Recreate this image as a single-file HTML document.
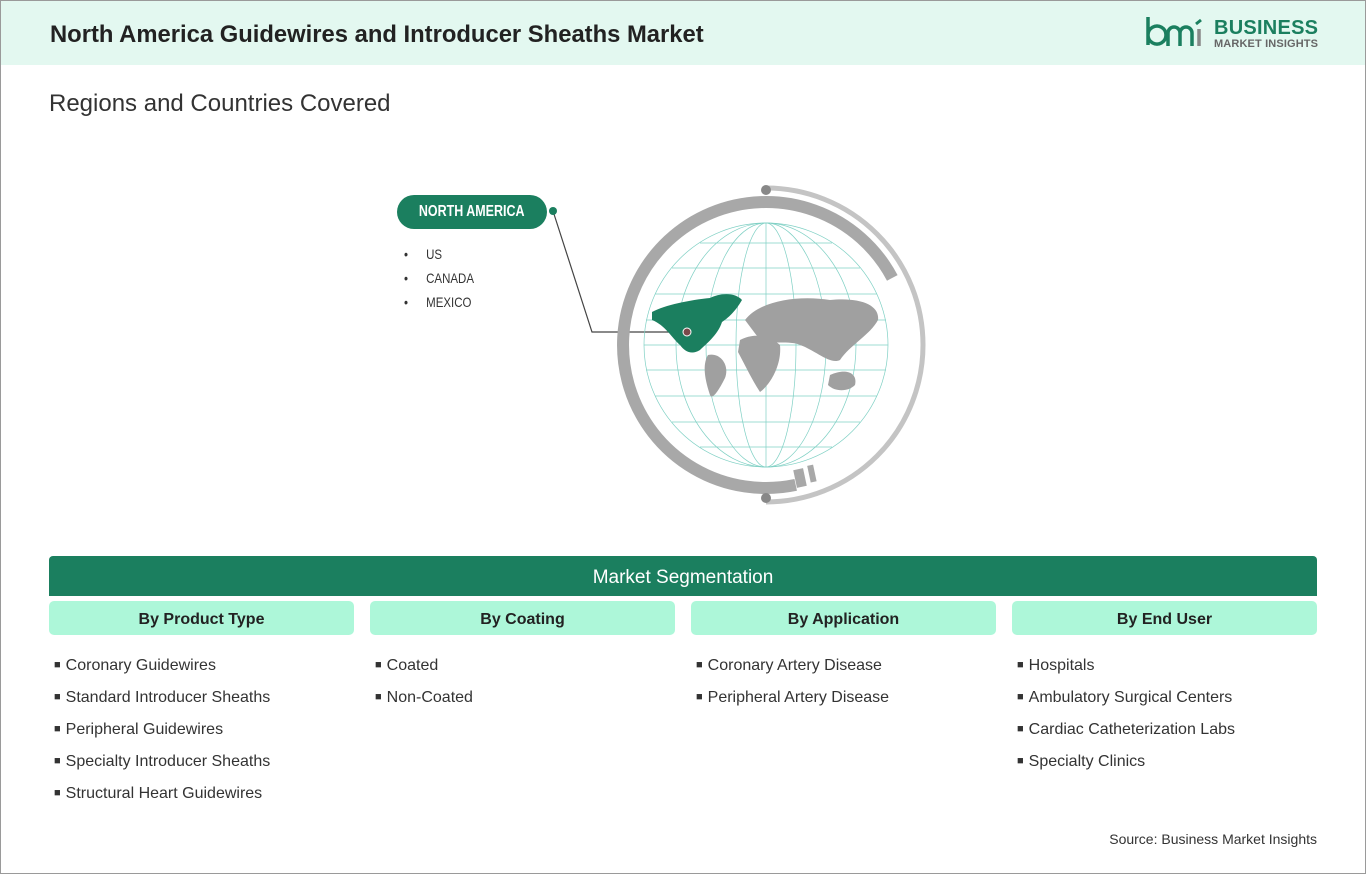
<!DOCTYPE html>
<html><head><meta charset="utf-8"><style>
*{margin:0;padding:0;box-sizing:border-box}
body{width:1366px;height:874px;background:#fff;font-family:"Liberation Sans",Arial,sans-serif;position:relative;overflow:hidden}
.frame{position:absolute;left:0;top:0;width:1366px;height:874px;border:1px solid #9a9a9a}
.hdr{position:absolute;left:1px;top:1px;width:1364px;height:64px;background:#e3f8f0}
.title{position:absolute;left:50px;top:21px;font-size:23.8px;font-weight:bold;color:#222}
.sub{position:absolute;left:49px;top:90px;font-size:24px;color:#333}
.segbar{position:absolute;left:49px;top:556px;width:1268px;height:40px;background:#1b7f5f;color:#fff;font-size:19px;text-align:center;line-height:44px;border-radius:4px 4px 0 0}
.col{position:absolute;top:601px;width:305px}
.col .h{height:34px;background:#adf7d9;border-radius:5px;text-align:center;font-weight:bold;font-size:16px;line-height:38px;color:#222}
.col ul{list-style:none;margin-top:22px;padding-left:5px}
.col li{font-size:16px;color:#333;height:32px}
.col li:before{content:"■";font-size:11px;margin-right:5px;position:relative;top:-2px}
.src{position:absolute;right:49px;top:831px;font-size:14px;color:#333}
.na{position:absolute;left:397px;top:195px;width:150px;height:34px;background:#1b7f5f;border-radius:17px;color:#fff;text-align:center;line-height:34px}
.na span{display:inline-block;font-size:16px;font-weight:bold;transform:scaleX(0.78);white-space:nowrap}
.cl{position:absolute;left:404px;font-size:14px;color:#333;transform:scaleX(0.82);transform-origin:left;font-weight:bold;-webkit-text-stroke:0}
.cl span{display:inline-block;width:27px}
</style></head><body>
<div class="hdr"></div>
<div class="frame"></div>
<div class="title">North America Guidewires and Introducer Sheaths Market</div>
<svg style="position:absolute;left:1144px;top:15px" width="180" height="36" viewBox="0 0 180 36">
<path d="M4 2 V30 M4 20 a9 9 0 1 1 0 .1" stroke="#1b7f5f" stroke-width="3.5" fill="none"/>
<path d="M24 31 V18 a6 6 0 0 1 12 0 V31 M36 18 a6 6 0 0 1 12 0 V31" stroke="#1b7f5f" stroke-width="3.5" fill="none"/>
<path d="M55 14 V31" stroke="#888" stroke-width="3.5"/><path d="M52 9 l5 -4" stroke="#1b7f5f" stroke-width="3"/>
<text x="70" y="19" font-family="Liberation Sans" font-weight="bold" font-size="20" fill="#1b7f5f" textLength="104">BUSINESS</text>
<text x="70" y="32" font-family="Liberation Sans" font-weight="bold" font-size="11" fill="#666" textLength="104">MARKET INSIGHTS</text>
</svg>
<div class="sub">Regions and Countries Covered</div>
<div class="na"><span>NORTH AMERICA</span></div>
<div class="cl" style="top:246px;font-weight:normal"><span>•</span>US</div>
<div class="cl" style="top:270px;font-weight:normal"><span>•</span>CANADA</div>
<div class="cl" style="top:294px;font-weight:normal"><span>•</span>MEXICO</div>
<svg style="position:absolute;left:0;top:0" width="1366" height="560">
<polyline points="553,211 592,332 686,332" stroke="#444" stroke-width="1.2" fill="none"/>
<circle cx="553" cy="211" r="4" fill="#1b7f5f"/>
<path d="M892.3 277.9 A143 143 0 1 0 795.7 484.9" stroke="#a8a8a8" stroke-width="12" fill="none"/>
<path d="M766 188 A157 157 0 0 1 766 502" stroke="#c4c4c4" stroke-width="5" fill="none"/>
<circle cx="766" cy="190" r="5" fill="#888"/><circle cx="766" cy="498" r="5" fill="#888"/>
<rect x="795" y="469" width="10" height="18" fill="#a8a8a8" transform="rotate(-12 800 478)"/>
<rect x="809" y="465" width="6" height="17" fill="#a8a8a8" transform="rotate(-12 812 474)"/>
<g stroke="#7fd0c4" stroke-width="0.7" fill="none">
<circle cx="766" cy="345" r="122"/>
<line x1="766" y1="223" x2="766" y2="467"/>
<ellipse cx="766" cy="345" rx="30" ry="122"/><ellipse cx="766" cy="345" rx="60" ry="122"/><ellipse cx="766" cy="345" rx="90" ry="122"/>
<line x1="700" y1="243" x2="832" y2="243"/><line x1="672" y1="268" x2="860" y2="268"/><line x1="655" y1="294" x2="877" y2="294"/><line x1="646" y1="320" x2="886" y2="320"/><line x1="644" y1="345" x2="888" y2="345"/><line x1="646" y1="370" x2="886" y2="370"/><line x1="655" y1="396" x2="877" y2="396"/><line x1="672" y1="422" x2="860" y2="422"/><line x1="700" y1="447" x2="832" y2="447"/>
</g>
<g fill="#a0a0a0">
<path d="M745 320 C760 300 800 295 830 300 C860 297 880 305 878 320 C870 335 850 345 840 360 C830 365 815 350 800 345 C790 340 770 345 760 340 Z"/>
<path d="M740 340 C755 332 770 336 780 345 C782 365 770 385 760 392 C752 380 745 365 738 352 Z"/>
<path d="M708 355 C720 352 730 365 725 378 C718 392 712 400 710 395 C705 380 702 365 708 355 Z"/>
<path d="M830 375 C845 368 858 372 855 385 C848 392 835 392 828 385 Z"/>
</g>
<path fill="#1b7f5f" d="M652 312 C665 305 690 300 710 298 C720 293 735 292 742 300 C735 312 728 318 722 322 C718 335 705 345 700 350 C692 355 685 352 680 345 C672 338 665 325 652 320 Z"/>
<circle cx="687" cy="332" r="4" fill="#7a4a4a" stroke="#fff" stroke-width="1"/>
</svg>
<div class="segbar">Market Segmentation</div>
<div class="col" style="left:49px"><div class="h">By Product Type</div><ul><li>Coronary Guidewires</li><li>Standard Introducer Sheaths</li><li>Peripheral Guidewires</li><li>Specialty Introducer Sheaths</li><li>Structural Heart Guidewires</li></ul></div>
<div class="col" style="left:370px"><div class="h">By Coating</div><ul><li>Coated</li><li>Non-Coated</li></ul></div>
<div class="col" style="left:691px"><div class="h">By Application</div><ul><li>Coronary Artery Disease</li><li>Peripheral Artery Disease</li></ul></div>
<div class="col" style="left:1012px"><div class="h">By End User</div><ul><li>Hospitals</li><li>Ambulatory Surgical Centers</li><li>Cardiac Catheterization Labs</li><li>Specialty Clinics</li></ul></div>
<div class="src">Source: Business Market Insights</div>
</body></html>
